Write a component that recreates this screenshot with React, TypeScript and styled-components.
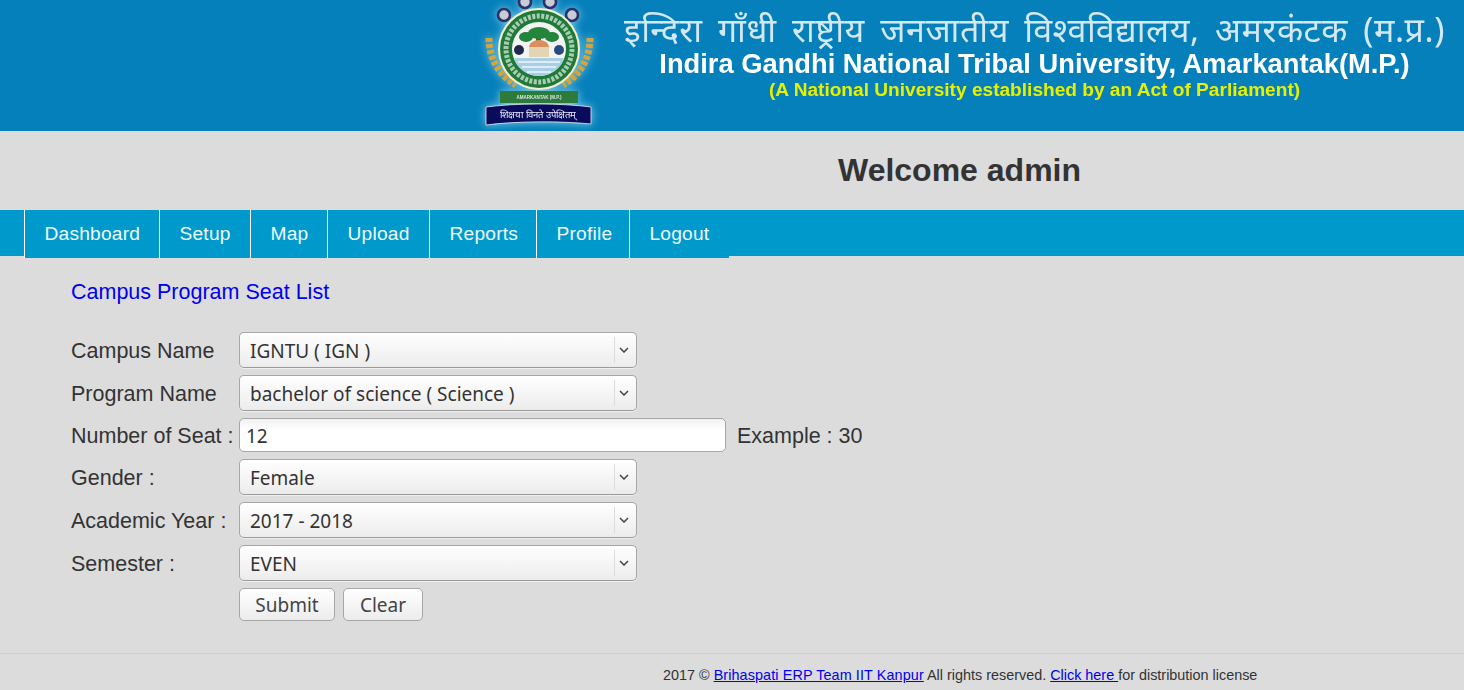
import React from "react";
import styled, { createGlobalStyle } from "styled-components";

const GlobalStyle = createGlobalStyle`
  html, body {
    margin: 0;
    padding: 0;
    background: #dcdcdc;
    font-family: "Liberation Sans", Arial, sans-serif;
    color: #333;
  }
`;

const Page = styled.div`
  width: 1464px;
  height: 690px;
  overflow: hidden;
`;

const Banner = styled.header`
  height: 131px;
  background: #0680bb;
  display: flex;
  justify-content: flex-end;
  padding-right: 12px;
  overflow: hidden;
`;

const Crest = styled.svg`
  width: 126px;
  height: 131px;
  flex: none;
  filter: blur(0.6px) drop-shadow(0 0 4px rgba(170, 230, 245, 0.75));
`;

const BannerText = styled.div`
  width: 835px;
  margin-left: 15px;
  display: flex;
  flex-direction: column;
  align-items: center;
  filter: blur(0.45px);
`;

const HindiTitle = styled.div`
  margin-top: 8px;
  height: 42px;
  line-height: 42px;
  font-size: 34px;
  letter-spacing: 0.55px;
  word-spacing: 6px;
  color: #d4e8f2;
  white-space: nowrap;
  font-family: "Noto Sans", "Liberation Sans", sans-serif;
`;

const EnglishTitle = styled.div`
  height: 29px;
  line-height: 28px;
  font-size: 27.3px;
  font-weight: bold;
  color: #fff;
  white-space: nowrap;
`;

const Tagline = styled.div`
  height: 22px;
  line-height: 22px;
  font-size: 19.1px;
  font-weight: bold;
  color: #e6f000;
  white-space: nowrap;
`;

const WelcomeBar = styled.div`
  height: 79px;
  padding-left: 838px;
  display: flex;
  align-items: center;
`;

const WelcomeTitle = styled.h1`
  margin: 0;
  font-size: 32px;
  font-weight: bold;
  color: #333;
`;

const NavBar = styled.nav`
  height: 46px;
  background: #0099cc;
  padding-left: 24px;
  display: flex;
  align-items: flex-start;
`;

const NavItem = styled.a<{ $width: number }>`
  width: ${(props) => props.$width}px;
  box-sizing: border-box;
  height: 48px;
  line-height: 47px;
  padding-left: 19.5px;
  border-left: 1px solid #fff;
  background: #0099cc;
  color: #eefaff;
  font-size: 19.2px;
  letter-spacing: 0.2px;
  white-space: nowrap;
`;

const Content = styled.main`
  padding: 24px 0 0 71px;
  height: 397px;
  box-sizing: border-box;
`;

const PageTitle = styled.div`
  height: 24px;
  line-height: 24px;
  font-size: 21.5px;
  color: #0000ee;
  margin-bottom: 28px;
`;

const FormRow = styled.div<{ $height: number }>`
  display: flex;
  align-items: center;
  height: ${(props) => props.$height}px;
  margin-bottom: 7px;
`;

const Label = styled.label`
  width: 168px;
  flex: none;
  padding-top: 2px;
  font-size: 21.5px;
  white-space: nowrap;
`;

const SelectBox = styled.div`
  width: 398px;
  height: 36px;
  box-sizing: border-box;
  display: flex;
  align-items: center;
  padding-left: 10px;
  border: 1px solid #a6a6a6;
  border-bottom-color: #9a9a9a;
  border-radius: 5px;
  background: linear-gradient(#ffffff, #ececec);
  box-shadow: 0 1px 1px rgba(255, 255, 255, 0.6);
  font-family: "Noto Sans", sans-serif;
  font-size: 19px;
  color: #333;
`;

const SelectValue = styled.span`
  flex: 1;
  padding-top: 2px;
  white-space: nowrap;
`;

const SelectArrow = styled.span`
  width: 21px;
  height: 26px;
  border-left: 1px solid #dcdcdc;
  display: flex;
  align-items: center;
  justify-content: center;
  svg {
    display: block;
    margin-right: 4px;
  }
`;

const TextInput = styled.div`
  width: 487px;
  height: 34px;
  box-sizing: border-box;
  line-height: 34px;
  padding-left: 6px;
  border: 1px solid #a6a6a6;
  border-radius: 5px;
  background: linear-gradient(#f2f2f2, #ffffff 35%);
  font-family: "Noto Sans", sans-serif;
  font-size: 19px;
  color: #333;
`;

const Hint = styled.span`
  margin-left: 11px;
  padding-top: 2px;
  font-size: 21.5px;
`;

const Buttons = styled.div`
  display: flex;
  gap: 8px;
  padding-left: 168px;
`;

const Button = styled.button<{ $width: number }>`
  width: ${(props) => props.$width}px;
  height: 33px;
  padding: 0;
  border: 1px solid #a6a6a6;
  border-radius: 5px;
  background: linear-gradient(#ffffff, #ececec);
  font-family: "Noto Sans", sans-serif;
  font-size: 19px;
  color: #444;
`;

const Footer = styled.footer`
  height: 37px;
  box-sizing: border-box;
  border-top: 1px solid #d0d0d0;
  padding: 12px 0 0 663px;
  font-size: 14.4px;
  line-height: 18px;
  white-space: nowrap;
  a {
    color: #0000ee;
    text-decoration: underline;
  }
`;

const TeamLink = styled.a`
  letter-spacing: 0.1px;
`;

const navItems = [
  { name: "Dashboard", width: 135 },
  { name: "Setup", width: 91 },
  { name: "Map", width: 77 },
  { name: "Upload", width: 102 },
  { name: "Reports", width: 107 },
  { name: "Profile", width: 93 },
  { name: "Logout", width: 100 },
];

const Chevron = () => (
  <SelectArrow>
    <svg width="10" height="6" viewBox="0 0 10 6">
      <path d="M1 1l4 4 4-4" fill="none" stroke="#444" strokeWidth="1.5" />
    </svg>
  </SelectArrow>
);

const Select = ({ label, value }: { label: string; value: string }) => (
  <FormRow $height={36}>
    <Label>{label}</Label>
    <SelectBox>
      <SelectValue>{value}</SelectValue>
      <Chevron />
    </SelectBox>
  </FormRow>
);

const UniversityCrest = () => (
  <Crest viewBox="0 0 126 131">
    {/* four figures along the top of the seal */}
    <g fill="#c8ccd4" stroke="#2c2f6b" strokeWidth="2.6">
      <circle cx="28" cy="15" r="6" />
      <circle cx="49" cy="2" r="6" />
      <circle cx="74" cy="2" r="6" />
      <circle cx="96" cy="15" r="6" />
    </g>
    {/* wheat */}
    <g fill="none" stroke="#d2a53f">
      <path d="M13 38 C13 58 22 74 40 85" strokeWidth="7" strokeDasharray="4 2" />
      <path d="M114 38 C114 58 105 74 87 85" strokeWidth="7" strokeDasharray="4 2" />
    </g>
    <circle cx="63" cy="49" r="41" fill="#f3efcf" />
    <circle cx="63" cy="49" r="39" fill="#1f7a3a" />
    <circle cx="63" cy="49" r="33" fill="none" stroke="#a9cdb0" strokeWidth="5" strokeDasharray="3 1.5" />
    <circle cx="63" cy="49" r="27" fill="#f2f4f2" />
    {/* tree */}
    <rect x="60" y="36" width="5" height="13" fill="#7a4a2a" />
    <ellipse cx="63" cy="33" rx="11" ry="6" fill="#23843c" />
    <ellipse cx="50" cy="37" rx="7" ry="5" fill="#23843c" />
    <ellipse cx="76" cy="37" rx="7" ry="5" fill="#23843c" />
    {/* building and animals */}
    <rect x="53" y="47" width="20" height="10" fill="#e3d4b4" />
    <path d="M53 47a10 7 0 0 1 20 0z" fill="#d98f5f" />
    <circle cx="43" cy="50" r="5" fill="#23264f" />
    <circle cx="83" cy="50" r="5" fill="#2a4a86" />
    {/* water */}
    <path d="M38 58h50c-3 11-14 18-25 18s-22-7-25-18z" fill="#a9cfe4" />
    <path d="M42 62h42M46 67h34M51 72h24" stroke="#eef6fb" strokeWidth="1.4" />
    {/* name plate and motto ribbon */}
    <rect x="24" y="91" width="78" height="12" fill="#2c7a3c" />
    <text x="63" y="99" textAnchor="middle" fontSize="4.5" fontWeight="bold" fill="#dfe8df">
      AMARKANTAK (M.P.)
    </text>
    <path d="M10 107c30-4 75-4 105 0v17c-30-3-75-3-105 1z" fill="#0b0b5c" stroke="#dfeaf2" strokeWidth="0.8" />
    <text x="62" y="118" textAnchor="middle" fontSize="9.5" fill="#e8e8ff">
      शिक्षया विनते उपेक्षितम्
    </text>
  </Crest>
);

export default function App() {
  return (
    <Page>
      <GlobalStyle />
      <Banner>
        <UniversityCrest />
        <BannerText>
          <HindiTitle>इन्दिरा गाँधी राष्ट्रीय जनजातीय विश्वविद्यालय, अमरकंटक (म.प्र.)</HindiTitle>
          <EnglishTitle>Indira Gandhi National Tribal University, Amarkantak(M.P.)</EnglishTitle>
          <Tagline>(A National University established by an Act of Parliament)</Tagline>
        </BannerText>
      </Banner>
      <WelcomeBar>
        <WelcomeTitle>Welcome admin</WelcomeTitle>
      </WelcomeBar>
      <NavBar>
        {navItems.map((item) => (
          <NavItem key={item.name} $width={item.width}>
            {item.name}
          </NavItem>
        ))}
      </NavBar>
      <Content>
        <PageTitle>Campus Program Seat List</PageTitle>
        <Select label="Campus Name" value="IGNTU ( IGN )" />
        <Select label="Program Name" value="bachelor of science ( Science )" />
        <FormRow $height={34}>
          <Label>Number of Seat :</Label>
          <TextInput>12</TextInput>
          <Hint>Example : 30</Hint>
        </FormRow>
        <Select label="Gender :" value="Female" />
        <Select label="Academic Year :" value="2017 - 2018" />
        <Select label="Semester :" value="EVEN" />
        <Buttons>
          <Button $width={96}>Submit</Button>
          <Button $width={80}>Clear</Button>
        </Buttons>
      </Content>
      <Footer>
        2017 © <TeamLink>Brihaspati ERP Team IIT Kanpur</TeamLink> All rights reserved. <a>Click here </a>for
        distribution license
      </Footer>
    </Page>
  );
}
